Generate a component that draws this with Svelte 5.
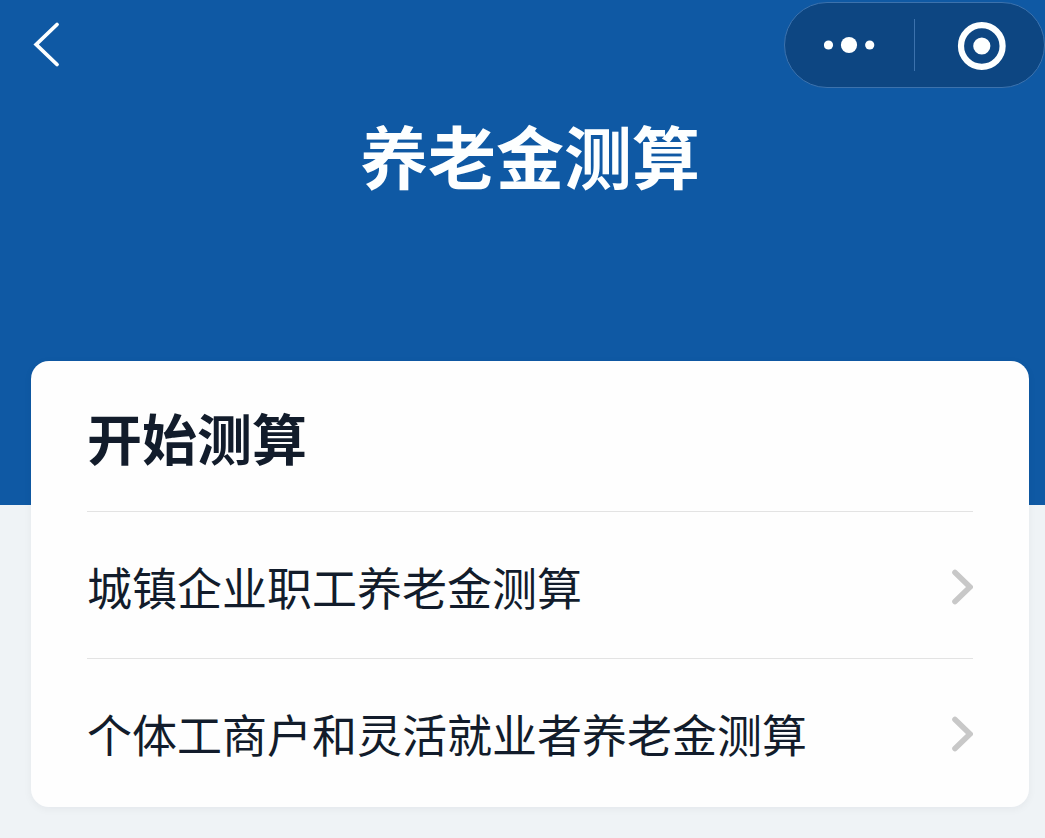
<script>
	export let title = '养老金测算';
	export let heading = '开始测算';

	// Menu entries
	export let items = [
		{ label: '城镇企业职工养老金测算', href: '#employee' },
		{ label: '个体工商户和灵活就业者养老金测算', href: '#flexible' }
	];
</script>

<div class="page">
	<header class="hero">
		<div class="top-bar">
			<button class="back" type="button" aria-label="返回">
				<svg width="32" height="48" viewBox="0 0 32 48">
					<path d="M26 3.5 5.200 23.500 26 43.5" fill="none" stroke="currentColor" stroke-width="3.8" stroke-linecap="round" />
				</svg>
			</button>
			<div class="capsule">
				<button type="button" aria-label="更多">
					<svg width="52" height="18" viewBox="0 0 52 18">
						<circle cx="4.500" cy="9" r="4.6" fill="currentColor" />
						<circle cx="25" cy="9" r="8.1" fill="currentColor" />
						<circle cx="45.700" cy="9" r="4.6" fill="currentColor" />
					</svg>
				</button>
				<span class="divider"></span>
				<button type="button" aria-label="关闭">
					<svg width="52" height="50" viewBox="0 0 52 50">
						<circle cx="27.800" cy="26" r="20.8" fill="none" stroke="currentColor" stroke-width="6.2" />
						<circle cx="27.800" cy="26" r="8.6" fill="currentColor" />
					</svg>
				</button>
			</div>
		</div>
		<h1>{title}</h1>
	</header>

	<main class="card">
		<h2>{heading}</h2>
		<nav>
			{#each items as item}
				<a class="row" href={item.href}>
					<span>{item.label}</span>
					<svg width="24" height="40" viewBox="0 0 24 40">
						<path d="M6 5.500 21 20 6 34.500" fill="none" stroke="#c8c8c8" stroke-width="5.600" stroke-linecap="round" />
					</svg>
				</a>
			{/each}
		</nav>
	</main>
</div>

<style>
	:global(body) {
		margin: 0;
		background: #eff3f6;
	}

	.page {
		font-family: 'Noto Sans CJK SC', 'Noto Sans', sans-serif;
		color: #121c2b;
		padding-bottom: 31px;
	}

	.hero {
		background: #0f59a4;
		color: #fdffff;
		padding-top: 2px;
		padding-bottom: 304px;
	}

	.top-bar {
		display: flex;
		align-items: center;
		justify-content: space-between;
		padding-left: 31px;
	}

	button {
		display: flex;
		align-items: center;
		justify-content: center;
		padding: 0;
		border: 0;
		background: none;
		color: inherit;
		cursor: pointer;
	}

	svg {
		display: block;
		flex: none;
	}

	.capsule {
		display: flex;
		align-items: center;
		box-sizing: border-box;
		width: 261px;
		height: 86px;
		border: 1px solid #3c72ad;
		border-radius: 43px;
		background: #0d4682;
	}

	.capsule button {
		flex: 1;
		height: 100%;
	}

	.capsule .divider {
		width: 1px;
		height: 52px;
		background: #3c72ad;
	}

	h1 {
		margin: 21px 16px 0 31px;
		font-size: 68px;
		line-height: 92px;
		font-weight: 700;
		text-align: center;
	}

	.card {
		margin: -144px 16px 0 31px;
		padding: 0 56px 2px;
		border-radius: 18px;
		background: #fefefe;
		box-shadow: 0 2px 8px rgba(18, 28, 43, 0.05);
	}

	h2 {
		margin: 0;
		padding: 35px 0;
		font-size: 55px;
		line-height: 80px;
		font-weight: 700;
	}

	.row {
		display: flex;
		align-items: center;
		justify-content: space-between;
		box-sizing: border-box;
		height: 147px;
		padding-top: 3px;
		border-top: 1px solid #e3e3e3;
		color: inherit;
		font-size: 45px;
		line-height: 64px;
		text-decoration: none;
	}
</style>
